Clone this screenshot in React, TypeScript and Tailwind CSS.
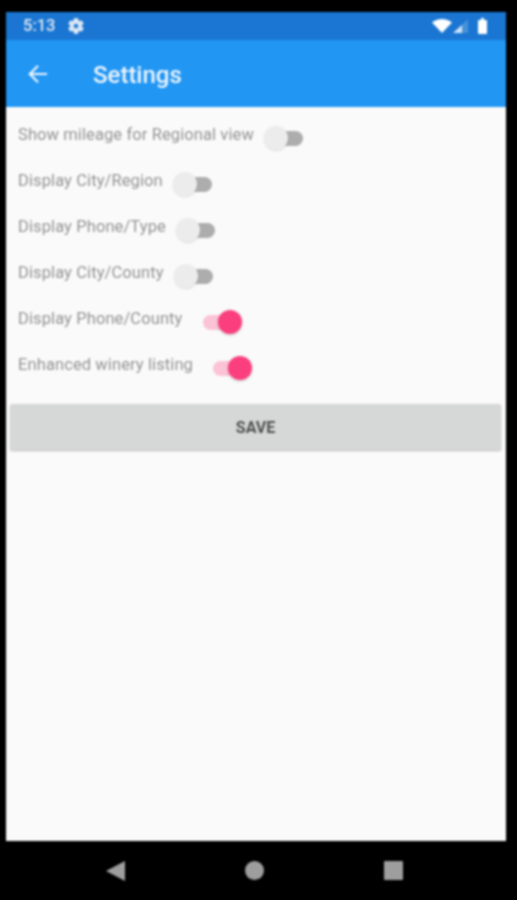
import React from "react";

const rows: [string, boolean][] = [
  ["Show mileage for Regional view", false],
  ["Display City/Region", false],
  ["Display Phone/Type", false],
  ["Display City/County", false],
  ["Display Phone/County", true],
  ["Enhanced winery listing", true],
];

function Toggle({ on }: { on: boolean }) {
  return (
    <div className="relative h-6 w-[39px] shrink-0">
      <div className={on ? "absolute left-0 right-[2px] top-[5px] h-[15px] rounded-full bg-[#fbc3d6]" : "absolute left-[2px] right-0 top-[5px] h-[15px] rounded-full bg-[#adadad]"} />
      <div className={on ? "absolute right-0 top-0 h-6 w-6 rounded-full bg-[#fb3f7e] shadow-[0_1px_3px_rgba(0,0,0,0.2)]" : "absolute left-0 top-0 h-6 w-6 rounded-full bg-[#ececec] shadow-[0_1px_2px_rgba(0,0,0,0.12)]"} />
    </div>
  );
}

export default function App() {
  return (
    <div className="h-[900px] w-[517px] overflow-hidden bg-black">
      <div className="h-[900px] w-[517px] bg-black pl-[6px] pt-3 font-['Roboto',sans-serif] blur-[0.8px]">
        <div className="flex h-[829px] w-[500px] flex-col bg-[#fafafa]">
          <div className="flex h-7 shrink-0 items-center bg-[#1a76d2] pl-[17px] pr-[19px] text-[#dfe9f5]">
            <span className="text-[16.500px] font-medium">5:13</span>
            <svg className="ml-[12px] h-[18px] w-[18px]" viewBox="0 0 24 24" fill="currentColor" stroke="currentColor" strokeWidth="1">
              <path d="M19.4 13c.04-.32.1-.66.1-1s-.06-.68-.1-1l2.1-1.65c.2-.15.25-.42.12-.64l-2-3.46c-.12-.22-.39-.3-.61-.22l-2.49 1c-.52-.4-1.08-.73-1.69-.98l-.38-2.65A.49.49 0 0 0 14 2h-4c-.25 0-.46.18-.49.42l-.38 2.65c-.61.25-1.17.59-1.69.98l-2.49-1a.5.5 0 0 0-.61.22l-2 3.46c-.13.22-.07.49.12.64L4.6 11c-.04.32-.1.66-.1 1s.06.68.1 1l-2.1 1.65c-.2.15-.25.42-.12.64l2 3.46c.12.22.39.3.61.22l2.49-1c.52.4 1.08.73 1.69.98l.38 2.65c.03.24.24.42.49.42h4c.25 0 .46-.18.49-.42l.38-2.65c.61-.25 1.17-.59 1.69-.98l2.49 1c.23.09.49 0 .61-.22l2-3.46c.12-.22.07-.49-.12-.64L19.4 13zM12 15.5a3.5 3.5 0 1 1 0-7 3.5 3.5 0 0 1 0 7z" />
            </svg>
            <div className="ml-auto flex items-center">
              <svg className="h-[14px] w-5" viewBox="0 0 20 14" fill="white"><path d="M0 3.500C2.700 1.300 6.200 0 10 0s7.300 1.300 10 3.500L10 14z" /></svg>
              <svg className="ml-[1px] h-[14px] w-[15px]" viewBox="0 0 15 14"><path d="M15 0v14H0z" fill="white" fillOpacity="0.2" /><path d="M9 6v8H0z" fill="white" fillOpacity="0.75" /></svg>
              <svg className="ml-[10px] h-[16px] w-[9px]" viewBox="0 0 9 16" fill="white"><path d="M3 0h3v2h2a1 1 0 0 1 1 1v12a1 1 0 0 1-1 1H1a1 1 0 0 1-1-1V3a1 1 0 0 1 1-1h2z" /></svg>
            </div>
          </div>
          <div className="flex h-[67px] shrink-0 items-center bg-[#2196f3] pl-[22px] text-[#eef6fe]">
            <svg className="h-[20px] w-[20px]" viewBox="0 0 22 22" fill="none" stroke="currentColor" strokeWidth="2.400"><path d="M21 11H2M11 2l-9 9 9 9" /></svg>
            <span className="ml-[45px] pt-[3px] text-[24px] font-medium leading-none">Settings</span>
          </div>
          <div className="flex flex-col pl-3 pt-2">
            {rows.map(([label, on]) => (
              <div key={label} className="flex h-[46px] items-center gap-[10px]">
                <span className={on ? "mr-[10px] pb-[6px] text-[16.500px] tracking-[0.1px] text-[#939393]" : "pb-[6px] text-[16.500px] tracking-[0.1px] text-[#939393]"}>{label}</span>
                <Toggle on={on} />
              </div>
            ))}
          </div>
          <button className="ml-1 mt-[13px] flex h-[46px] w-[491px] items-center justify-center rounded-[2px] bg-[#d6d7d7] pt-[2px] text-[16px] font-bold text-[#4f4f4f] shadow-[0_1px_2px_rgba(0,0,0,0.25)]">
            SAVE
          </button>
        </div>
        <div className="flex h-[59px] w-[500px] items-center justify-center gap-[120px] pr-[3px]">
          <svg className="h-5 w-[19px]" viewBox="0 0 19 20" fill="#9e9e9e"><path d="M19 0v20L0 10z" /></svg>
          <div className="h-[19px] w-[19px] rounded-full bg-[#9e9e9e]" />
          <div className="h-[19px] w-[19px] rounded-[1px] bg-[#9e9e9e]" />
        </div>
      </div>
    </div>
  );
}
